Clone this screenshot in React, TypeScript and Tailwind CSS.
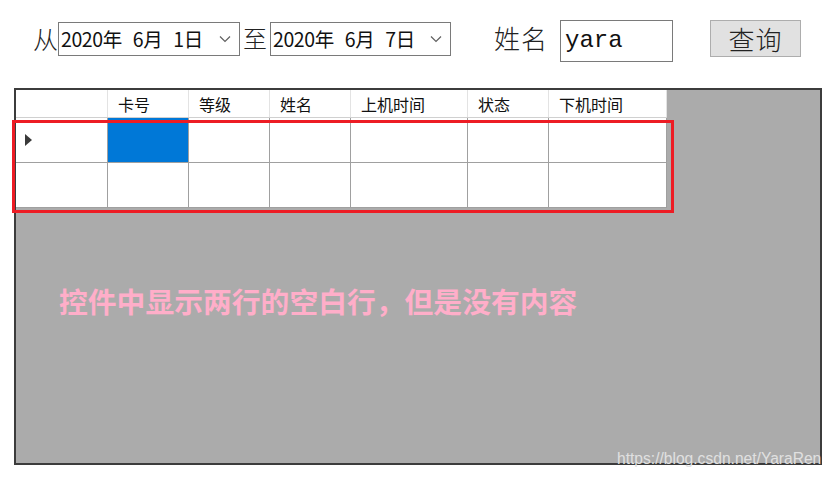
import React from 'react';

const cjk = "font-['Noto_Sans_CJK_SC',sans-serif]";

function Chevron() {
  return (
    <svg width="12" height="8" viewBox="0 0 12 8" className="shrink-0">
      <path d="M1 1.5 L6 6.5 L11 1.5" fill="none" stroke="#606060" strokeWidth="1.2" />
    </svg>
  );
}

function DatePicker({ day, width }: { day: string; width: string }) {
  return (
    <div
      className={`${width} h-[34px] mt-[22px] border border-[#7a7a7a] bg-white flex items-center pl-[2px] pr-[8px]`}
    >
      <div className={`${cjk} flex items-center text-[19.5px] leading-none text-[#111] tracking-[-0.4px]`}>
        <span>2020年</span>
        <span className="ml-[11px]">6月</span>
        <span className="ml-[11px]">{day}日</span>
      </div>
      <div className="flex-1" />
      <Chevron />
    </div>
  );
}

const columns = [
  { label: '卡号', w: 'w-[81px]' },
  { label: '等级', w: 'w-[81px]' },
  { label: '姓名', w: 'w-[81px]' },
  { label: '上机时间', w: 'w-[117px]' },
  { label: '状态', w: 'w-[81px]' },
  { label: '下机时间', w: 'w-[118px]' },
];

export default function App() {
  return (
    <div className="relative w-[834px] h-[479px] bg-white overflow-hidden">
      {/* Query bar */}
      <div className="flex items-start h-[88px] pl-[33px]">
        <span className={`${cjk} text-[25px] leading-none mt-[26px] text-[#222] font-light`}>从</span>
        <DatePicker day="1" width="w-[182px]" />
        <span className={`${cjk} text-[24px] leading-none mt-[26px] mx-[3px] text-[#222] font-light`}>至</span>
        <DatePicker day="7" width="w-[181px]" />
        <span className={`${cjk} text-[26px] leading-none mt-[25px] ml-[43px] text-[#222] font-light tracking-[1px]`}>
          姓名
        </span>
        <div className="w-[113px] h-[42px] mt-[20px] ml-[12px] border border-[#7a7a7a] bg-white flex items-center pl-[4px]">
          <span className="font-['Liberation_Mono',monospace] text-[24px] leading-none text-[#111]">yara</span>
        </div>
        <button className="w-[91px] h-[37px] mt-[20px] ml-[37px] bg-[#e1e1e1] border border-[#adadad] flex items-center justify-center">
          <span className={`${cjk} text-[26px] leading-none text-[#222] font-light tracking-[1px]`}>查询</span>
        </button>
      </div>

      {/* Data grid */}
      <div className="ml-[14px] w-[808px] h-[377px] border-2 border-[#3c3c3c] bg-[#ababab]">
        <div className={`${cjk} w-[651px]`}>
          <div className="flex h-[28px] bg-white border-b border-[#d0d0d0]">
            <div className="w-[92px] border-r border-[#e3e3e3]" />
            {columns.map((c) => (
              <div
                key={c.label}
                className={`${c.w} border-r border-[#e3e3e3] flex items-center pl-[10px] text-[16px] text-[#111]`}
              >
                {c.label}
              </div>
            ))}
          </div>
          {[0, 1].map((r) => (
            <div key={r} className="flex h-[45px] bg-white border-b border-[#a0a0a0]">
              <div className="w-[92px] border-r border-[#a0a0a0] flex items-center pl-[9px]">
                {r === 0 && (
                  <svg width="8" height="12" viewBox="0 0 8 12">
                    <path d="M0 0 L7 6 L0 12 Z" fill="#3a3a3a" />
                  </svg>
                )}
              </div>
              {columns.map((c, i) => (
                <div
                  key={c.label}
                  className={`${c.w} border-r border-[#a0a0a0] ${r === 0 && i === 0 ? 'bg-[#0078d7]' : 'bg-white'}`}
                />
              ))}
            </div>
          ))}
        </div>
      </div>

      {/* Annotations */}
      <div className="absolute left-[12px] top-[120px] w-[662px] h-[93px] border-[3px] border-[#ed1c24]" />
      <div
        className={`${cjk} absolute left-[59px] top-[282px] text-[28.8px] leading-[38px] font-bold text-[#ffaec9] whitespace-nowrap`}
      >
        控件中显示两行的空白行，但是没有内容
      </div>
      <div className="absolute left-[617px] top-[449px] font-['Liberation_Sans',sans-serif] text-[15.6px] leading-[20px] text-[#e0e0e0]">
        https://blog.csdn.net/YaraRen
      </div>
    </div>
  );
}
